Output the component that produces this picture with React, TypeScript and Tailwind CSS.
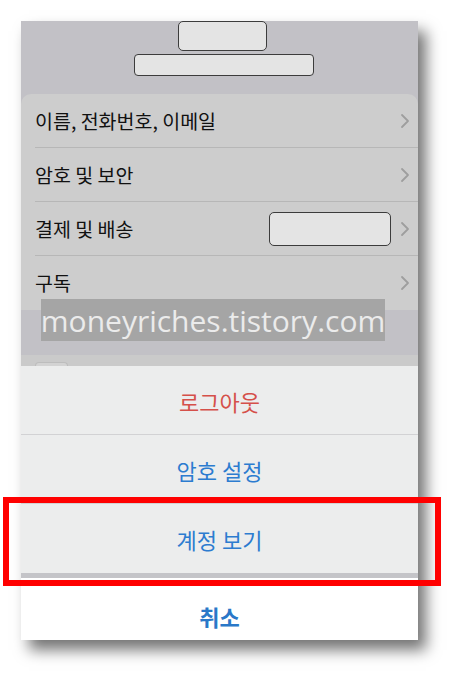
import React from "react";

const Chevron = () => (
  <svg width="10" height="16" viewBox="0 0 10 16" className="shrink-0">
    <path d="M2 2 L8 8 L2 14" fill="none" stroke="#9e9e9e" strokeWidth="1.8" strokeLinecap="round" strokeLinejoin="round" />
  </svg>
);

const Row = ({ label, last, box }: { label: string; last?: boolean; box?: boolean }) => (
  <div className="pl-[14px]">
    <div className={`h-[54px] flex items-center pr-[8px] ${last ? "" : "border-b border-[#b7b7b7]"}`}>
      <span className="text-[19.5px] text-[#111] flex-1">{label}</span>
      {box && <div className="w-[122px] h-[34px] rounded-[5px] border border-[#3c3c3c] bg-[#e4e4e4] mr-[9px]" />}
      <Chevron />
    </div>
  </div>
);

const Action = ({ label, color, last }: { label: string; color: string; last?: boolean }) => (
  <div className={`h-[69px] flex items-center justify-center ${last ? "" : "border-b border-[#d2d2d4]"}`}>
    <span className={`text-[22px] pt-[2px] ${color}`}>{label}</span>
  </div>
);

export default function App() {
  return (
    <div
      className="relative w-[460px] h-[684px] bg-white overflow-hidden pt-[21px] pl-[21px]"
      style={{ fontFamily: '"Noto Sans CJK KR", "Noto Sans", sans-serif' }}
    >
      <div className="w-[397px] flex flex-col bg-[#c2c1c6] shadow-[8px_10px_14px_rgba(0,0,0,0.55)]">
        {/* header */}
        <div className="h-[73px] flex flex-col items-start">
          <div className="ml-[157px] w-[89px] h-[30px] rounded-[5px] border border-[#3c3c3c] bg-[#e4e4e4]" />
          <div className="ml-[113px] w-[180px] h-[22px] mt-[3px] rounded-[4px] border border-[#3c3c3c] bg-[#e4e4e4]" />
        </div>
        {/* list */}
        <div className="bg-[#cdcdcd] rounded-t-[10px]">
          <Row label="이름, 전화번호, 이메일" />
          <Row label="암호 및 보안" />
          <Row label="결제 및 배송" box />
          <Row label="구독" last />
        </div>
        <div className="h-[45px] bg-[#c2c1c6]" />
        <div className="h-[11px] bg-[#cacaca] pl-[14px] flex items-end">
          <div className="w-[33px] h-[4px] rounded-t-[4px] border border-b-0 border-[#bdbdbd] bg-[#d3d3d3]" />
        </div>
        {/* action sheet */}
        <div className="bg-[#eceded]">
          <Action label="로그아웃" color="text-[#d5504a]" />
          <Action label="암호 설정" color="text-[#2c7cd0]" />
          <Action label="계정 보기" color="text-[#2c7cd0]" last />
        </div>
        <div className="h-[5px] bg-[#c4c4c8]" />
        <div className="h-[62px] bg-white flex items-center justify-center pt-[14px]">
          <span className="text-[22px] font-bold text-[#2a78c8]">취소</span>
        </div>
      </div>

      {/* watermark */}
      <div
        className="absolute left-[41px] top-[299px] w-[344px] h-[42px] bg-[#a5a5a5] flex items-center justify-center text-[#ebebeb] text-[30px] leading-none pt-[2px]"
        style={{ fontFamily: '"Open Sans", "Noto Sans", sans-serif' }}
      >
        moneyriches.tistory.com
      </div>

      {/* red highlight */}
      <div className="absolute left-[3px] top-[497px] w-[438px] h-[89px] border-[6px] border-[#ff0000]" />
    </div>
  );
}
